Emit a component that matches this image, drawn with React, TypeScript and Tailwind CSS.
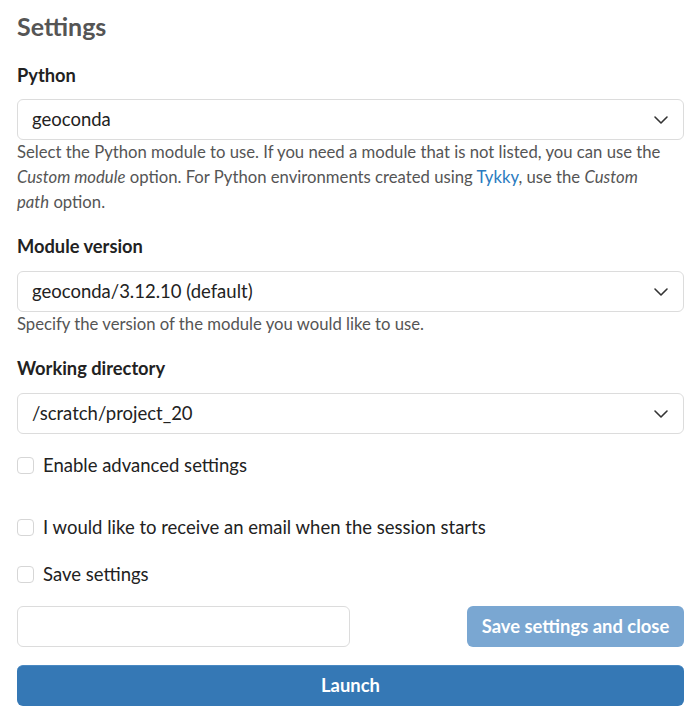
import { ChevronDown } from "lucide-react";

type SelectProps = { value: string };

function FakeSelect({ value }: SelectProps) {
  return (
    <div className="flex h-[41px] items-center justify-between rounded-[6px] border border-[#dcdcdc] bg-white pl-[14px] pr-[10px] text-[18.5px] text-[#222]">
      <span>{value}</span>
      <ChevronDown size={24} strokeWidth={1.6} className="text-[#333]" />
    </div>
  );
}

function Check({ label }: { label: string }) {
  return (
    <label className="flex items-center gap-[9px] text-[18.5px] leading-[24px] text-[#222]">
      <span className="h-[17px] w-[17px] shrink-0 rounded-[4px] border border-[#d6d6d6] bg-white" />
      {label}
    </label>
  );
}

export default function App() {
  return (
    <div
      className="min-h-screen bg-white pl-[17px] pr-[12px] pb-4"
      style={{ fontFamily: "Lato, 'Open Sans', sans-serif" }}
    >
      <h2 className="pt-[13px] text-[25px] font-bold leading-[26px] text-[#555]">Settings</h2>

      <div className="mt-[24px] text-[18.3px] font-bold leading-[24px] text-[#222]">Python</div>
      <div className="mt-[12px]">
        <FakeSelect value="geoconda" />
      </div>
      <p className="text-[16.7px] leading-[25px] text-[#555]">
        Select the Python module to use. If you need a module that is not listed, you can use the
        <br />
        <em>Custom module</em> option. For Python environments created using{" "}
        <a className="text-[#2a7bbf]">Tykky</a>, use the <em>Custom</em>
        <br />
        <em>path</em> option.
      </p>

      <div className="mt-[19px] text-[18.3px] font-bold leading-[24px] text-[#222]">Module version</div>
      <div className="mt-[13px]">
        <FakeSelect value="geoconda/3.12.10 (default)" />
      </div>
      <p className="text-[16.7px] leading-[25px] text-[#555]">
        Specify the version of the module you would like to use.
      </p>

      <div className="mt-[19px] text-[18.3px] font-bold leading-[24px] text-[#222]">Working directory</div>
      <div className="mt-[13px]">
        <FakeSelect value="/scratch/project_20" />
      </div>

      <div className="mt-[19px]">
        <Check label="Enable advanced settings" />
      </div>
      <div className="mt-[38px]">
        <Check label="I would like to receive an email when the session starts" />
      </div>
      <div className="mt-[23px]">
        <Check label="Save settings" />
      </div>

      <div className="mt-[20px] flex items-center justify-between">
        <input className="h-[41px] w-[333px] rounded-[6px] border border-[#dcdcdc] bg-white px-3 text-[16px] outline-none" />
        <button className="h-[41px] w-[217px] rounded-[6px] bg-[#7aa7d2] text-[18.4px] font-bold text-white">
          Save settings and close
        </button>
      </div>

      <button className="mt-[18px] h-[41px] w-full rounded-[6px] border-t border-[#4a89c2] bg-[#3578b5] text-[18.4px] font-bold text-white">
        Launch
      </button>
    </div>
  );
}
